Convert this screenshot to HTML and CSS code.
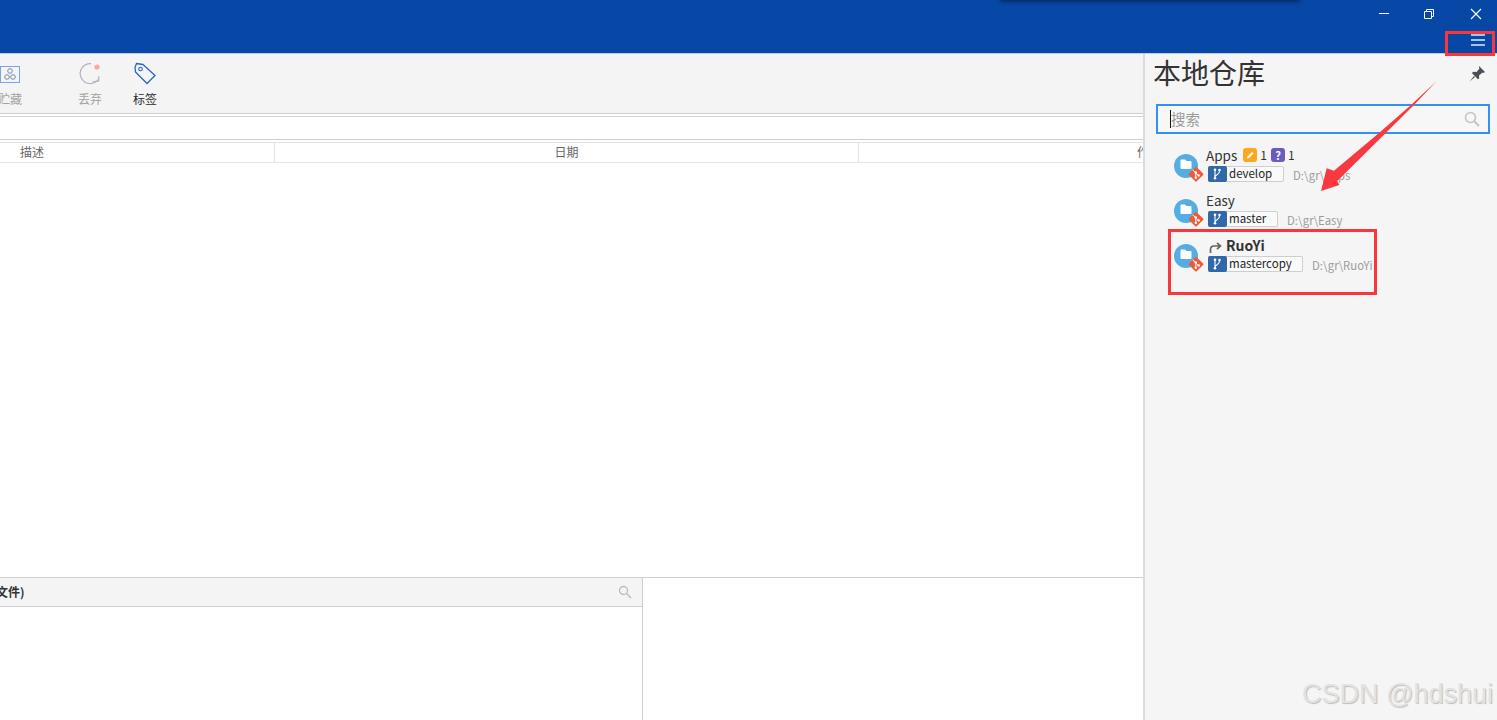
FILE: index.html
```html
<!DOCTYPE html>
<html lang="zh">
<head>
<meta charset="utf-8">
<title>本地仓库</title>
<link rel="stylesheet" href="styles.css">
</head>
<body>
<header class="titlebar">
  <div class="shadow-strip"></div>
  <div class="win-controls">
    <svg class="win-icon" width="46" height="28" viewBox="0 0 46 28"><path d="M20 13.500h10" stroke="#fff" stroke-width="1"/></svg>
    <svg class="win-icon" width="46" height="28" viewBox="0 0 46 28"><path d="M18.500 11.500h7v7h-7zM20.500 11V9.500h7v7H26" fill="none" stroke="#fff" stroke-width="1"/></svg>
    <svg class="win-icon" width="46" height="28" viewBox="0 0 46 28"><path d="M18 9l10 10M28 9L18 19" stroke="#fff" stroke-width="1.100"/></svg>
  </div>
  <div class="menu-row">
    <svg width="14" height="12" viewBox="0 0 14 12"><path d="M0 1h14M0 6h14M0 11h14" stroke="#a9c1ea" stroke-width="2"/></svg>
  </div>
</header>
<div class="app">
  <main class="main">
    <div class="toolbar">
      <div class="tool tool-stash">
        <svg class="stash-icon" width="22" height="18" viewBox="0 0 22 18"><rect x="2.500" y="1.500" width="19" height="16" fill="none" stroke="#7ba4e6"/><g fill="none" stroke="#7a8ca8"><circle cx="12" cy="6" r="2.300"/><circle cx="9" cy="12" r="2.300"/><circle cx="15" cy="12" r="2.300"/></g></svg>
        <span class="tool-label dim">贮藏</span>
      </div>
      <div class="tool tool-discard">
        <svg width="24" height="24" viewBox="0 0 24 24"><path d="M13 1.600A10 10 0 1 0 20.300 17.500" fill="none" stroke="#aeb3bd" stroke-width="1.200"/><path d="M14.500 19.800L20.700 19 20.800 14.300" fill="none" stroke="#aeb3bd" stroke-width="1.200"/><circle cx="19" cy="5" r="2.600" fill="#fba99e"/></svg>
        <span class="tool-label dim">丢弃</span>
      </div>
      <div class="tool tool-tag">
        <svg width="24" height="24" viewBox="0 0 24 24"><path d="M2 5.500L3.500 1.500 10 2.500 22 13.500 14 21.500 2.500 10z" fill="none" stroke="#2467c8" stroke-width="1.300" stroke-linejoin="round"/><circle cx="7.500" cy="7" r="1.800" fill="none" stroke="#2467c8" stroke-width="1.100"/></svg>
        <span class="tool-label">标签</span>
      </div>
    </div>
    <div class="filter-row"></div>
    <div class="grid-head">
      <div class="col col-desc">描述</div>
      <div class="col col-date">日期</div>
      <div class="col col-author">作者</div>
    </div>
    <div class="grid-body"></div>
    <div class="lower">
      <section class="files">
        <div class="files-head">
          <span class="files-title">文件)</span>
          <svg width="14" height="14" viewBox="0 0 14 14"><circle cx="5.500" cy="5.500" r="4" fill="none" stroke="#bdbdbd" stroke-width="1.300"/><path d="M8.500 8.500l4.500 4.500" stroke="#bdbdbd" stroke-width="1.500"/></svg>
        </div>
      </section>
      <section class="preview"></section>
    </div>
  </main>
  <aside class="side">
    <div class="side-head">
      <h1 class="side-title">本地仓库</h1>
      <svg width="18" height="18" viewBox="0 0 18 18"><path d="M11 1l6 6-1.500 1-1-.5-3.500 3 .2 3L10 14.200 3.800 8 5.500 6.800l3 .2 3-3.500-.5-1zM6 11l-4.500 5.500L7 12z" fill="#4a4f57"/></svg>
    </div>
    <div class="search">
      <span class="caret"></span><span class="search-text">搜索</span>
      <svg width="16" height="16" viewBox="0 0 16 16"><circle cx="6.500" cy="6.500" r="5" fill="none" stroke="#c4c4c4" stroke-width="1.600"/><path d="M10 10l5 5" stroke="#c4c4c4" stroke-width="2"/></svg>
    </div>
    <ul class="repos">
      <li class="repo">
        <svg class="repo-icon" width="32" height="32" viewBox="0 0 32 32"><use href="#repo"/></svg>
        <div class="repo-body">
          <div class="repo-name">Apps
            <span class="st st-mod"><svg width="14" height="14" viewBox="0 0 14 14"><path d="M4 10.500l.5-2L9 4l1.500 1.500L6 10z" fill="#fff"/></svg></span><span class="num">1</span>
            <span class="st st-new">?</span><span class="num">1</span>
          </div>
          <div class="repo-line"><span class="branch branch-a"><svg width="19" height="16" viewBox="0 0 19 16"><use href="#br"/></svg><span class="branch-name">develop</span></span><span class="repo-path">D:\gr\Apps</span></div>
        </div>
      </li>
      <li class="repo">
        <svg class="repo-icon" width="32" height="32" viewBox="0 0 32 32"><use href="#repo"/></svg>
        <div class="repo-body">
          <div class="repo-name">Easy</div>
          <div class="repo-line"><span class="branch branch-b"><svg width="19" height="16" viewBox="0 0 19 16"><use href="#br"/></svg><span class="branch-name">master</span></span><span class="repo-path">D:\gr\Easy</span></div>
        </div>
      </li>
      <li class="repo">
        <svg class="repo-icon" width="32" height="32" viewBox="0 0 32 32"><use href="#repo"/></svg>
        <div class="repo-body">
          <div class="repo-name current"><svg width="13" height="12" viewBox="0 0 13 12"><path d="M1.500 12V8.500Q1.500 5 5 5h6M8 1.800L11.500 5 8 8.200" fill="none" stroke="#6a645c" stroke-width="1.700"/></svg>RuoYi</div>
          <div class="repo-line"><span class="branch branch-c"><svg width="19" height="16" viewBox="0 0 19 16"><use href="#br"/></svg><span class="branch-name">mastercopy</span></span><span class="repo-path">D:\gr\RuoYi</span></div>
        </div>
      </li>
    </ul>
  </aside>
</div>

<svg class="defs" width="0" height="0">
  <defs>
    <g id="repo">
      <circle cx="12" cy="12" r="12" fill="#55aee3"/>
      <path d="M6.500 6.500a1 1 0 0 1 1-1h3.500l1.500 1.500h4a1 1 0 0 1 1 1v6a1 1 0 0 1-1 1H7.500a1 1 0 0 1-1-1z" fill="#fff"/>
      <rect x="16.500" y="14.700" width="11" height="11" rx="1" transform="rotate(45 22 20.200)" fill="#ee5a3a"/>
      <path d="M18.500 15.700l6 6M21.800 18.200v6" stroke="#fff" stroke-width="1"/>
      <circle cx="21.800" cy="18.500" r="1.200" fill="#fff"/><circle cx="21.800" cy="23.700" r="1.200" fill="#fff"/><circle cx="24.700" cy="21.400" r="1.200" fill="#fff"/>
    </g>
    <g id="br">
      <rect width="19" height="16" rx="2" fill="#2f69a8"/>
      <path d="M7 12V4M7 11.500c0-3.500 4.500-2 4.500-6.500" fill="none" stroke="#fff" stroke-width="1.100"/>
      <circle cx="7" cy="3.800" r="1.300" fill="#fff"/><circle cx="7" cy="12.200" r="1.300" fill="#fff"/><circle cx="11.500" cy="4" r="1.300" fill="#fff"/>
    </g>
  </defs>
</svg>

<div class="mark mark-menu"></div>
<div class="mark mark-repo"></div>
<svg class="arrow" width="130" height="120" viewBox="1315 78 130 120"><path d="M1436.700 81L1411 105 1379.300 132.700 1334 170.700 1326.700 168.300 1321 191 1339.300 185 1337.300 181 1386 132.700 1414 105z" fill="#f9393f"/></svg>
<div class="watermark">CSDN @hdshui</div>
</body>
</html>
```
FILE: styles.css
```css
* { box-sizing: border-box; }
html, body { margin: 0; padding: 0; height: 720px; overflow: hidden; }
body { font-family: "Noto Sans CJK SC", "Open Sans", sans-serif; font-size: 12px; color: #333; background: #fff; width: 1497px; }

.titlebar { height: 54px; background: #0747a6; border-bottom: 1px solid #c5cbd6; position: relative; display: flex; flex-direction: column; align-items: flex-end; }
.shadow-strip { position: absolute; left: 1000px; top: -6px; width: 300px; height: 6px; box-shadow: 0 1px 5px rgba(0, 0, 0, .55); }
.win-controls { display: flex; height: 28px; margin-right: -2px; }
.win-icon { display: block; margin-left: 1px; }
.menu-row { display: flex; justify-content: flex-end; padding: 6px 12px 0 0; }
.menu-row svg { display: block; }

.app { display: flex; height: 666px; }
.main { width: 1143px; display: flex; flex-direction: column; background: #fff; overflow: hidden; }

.toolbar { height: 60px; flex: none; background: #f4f4f4; border-bottom: 1px solid #cfcfcf; display: flex; overflow: hidden; }
.tool { display: flex; flex-direction: column; align-items: center; flex: none; width: 60px; padding-top: 8px; }
.tool svg { display: block; height: 24px; }
.tool .stash-icon { margin-right: 2px; }
.tool-stash { margin-left: -20px; }
.tool-discard { margin-left: 20px; }
.tool-tag { margin-left: -5px; }
.tool-label { margin-top: 5px; line-height: 16px; font-size: 12px; color: #2b2b2b; white-space: nowrap; }
.tool-label.dim { color: #a3a3a3; }

.filter-row { height: 24px; flex: none; margin-top: 2px; background: #fff; border-top: 1px solid #d3d3d3; border-bottom: 1px solid #cfcfcf; }
.grid-head { height: 21px; flex: none; display: flex; background: #fff; border-top: 1px solid #e2e2e2; border-bottom: 1px solid #e6e6e6; margin-top: 2px; }
.col { line-height: 18px; font-size: 12px; color: #666; text-align: center; border-right: 1px solid #e2e2e2; height: 19px; white-space: nowrap; flex: none; }
.col-desc { width: 275px; text-align: left; padding-left: 20px; }
.col-date { width: 584px; }
.col-author { width: 580px; border-right: 0; }
.grid-body { flex: 1; background: #fff; }

.lower { height: 143px; flex: none; display: flex; border-top: 1px solid #cfcfcf; }
.files { width: 643px; flex: none; border-right: 1px solid #cfcfcf; }
.files-head { height: 29px; background: #f4f4f4; border-bottom: 1px solid #cfcfcf; display: flex; align-items: center; justify-content: space-between; padding: 0 10px 0 0; }
.files-title { font-weight: 700; font-size: 12px; color: #333; margin-left: -4px; line-height: 28px; }
.files-head svg { display: block; }
.preview { flex: 1; background: #fff; }

.side { flex: 1; background: #f5f5f5; border-left: 2px solid #dcdcdc; overflow: hidden; }
.side-head { display: flex; justify-content: space-between; align-items: center; height: 40px; padding: 0 11px 0 8px; }
.side-title { margin: 0; align-self: flex-start; font-weight: 400; font-size: 28px; line-height: 36px; color: #333; }
.search { display: flex; align-items: center; height: 30px; margin: 10px 7px 0 11px; border: 2px solid #2e93f5; background: #f7f7f7; padding: 0 8px 0 12px; }
.caret { width: 1px; height: 18px; background: #111; flex: none; }
.search-text { flex: 1; font-size: 14.500px; color: #9a9a9a; line-height: 20px; margin: -1px 0 0 0; }
.search svg { display: block; flex: none; }

.repos { list-style: none; margin: 13px 0 0; padding: 0; }
.repo { display: flex; height: 45px; width: 232px; overflow: hidden; padding-left: 29px; }
.repo-icon { display: block; flex: none; margin-top: 7px; }
.repo-body { display: flex; flex-direction: column; min-width: 0; flex: none; margin-top: -2px; }
.repo-name { height: 21px; flex: none; display: flex; align-items: center; font-size: 13.500px; line-height: 20px; color: #333; white-space: nowrap; padding-bottom: 2px; }
.repo-name.current { font-weight: 700; font-size: 14px; padding: 0 0 1px 3px; }
.repo-name.current svg { margin: 4px 4px 0 0; flex: none; }
.st { display: inline-flex; align-items: center; justify-content: center; width: 14px; height: 14px; border-radius: 3px; margin-left: 6px; color: #fff; font-size: 11px; font-weight: 700; line-height: 14px; }
.st-mod { background: #fba81a; }
.st-new { background: #6a5cb8; margin-left: 4px; }
.num { font-size: 12px; margin-left: 3px; }
.repo-line { display: flex; align-items: center; height: 16px; white-space: nowrap; margin-left: 2px; }
.branch { display: flex; height: 16px; border: 1px solid #cfcfcf; border-left: 0; border-radius: 2px; background: #fafafa; flex: none; }
.branch svg { display: block; flex: none; margin-top: -1px; }
.branch-name { font-size: 11.500px; line-height: 12px; color: #222; padding-left: 2px; }
.branch-a { width: 76px; }
.branch-b { width: 70px; }
.branch-c { width: 95px; }
.repo-path { font-size: 11.300px; color: #9b9b9b; margin: 1px 0 0 9px; }
.defs { position: absolute; }

.mark { position: absolute; border: 3px solid #f9363c; }
.mark-menu { left: 1445px; top: 31px; width: 50px; height: 25px; }
.mark-repo { left: 1168px; top: 229px; width: 209px; height: 66px; }
.arrow { position: absolute; left: 1315px; top: 78px; display: block; }
.watermark { position: absolute; right: 4px; top: 678px; font-family: "Liberation Sans", sans-serif; font-size: 27px; line-height: 32px; color: #e2e2e2; text-shadow: 1px 1px 1px #bdbdbd; white-space: nowrap; }
```
